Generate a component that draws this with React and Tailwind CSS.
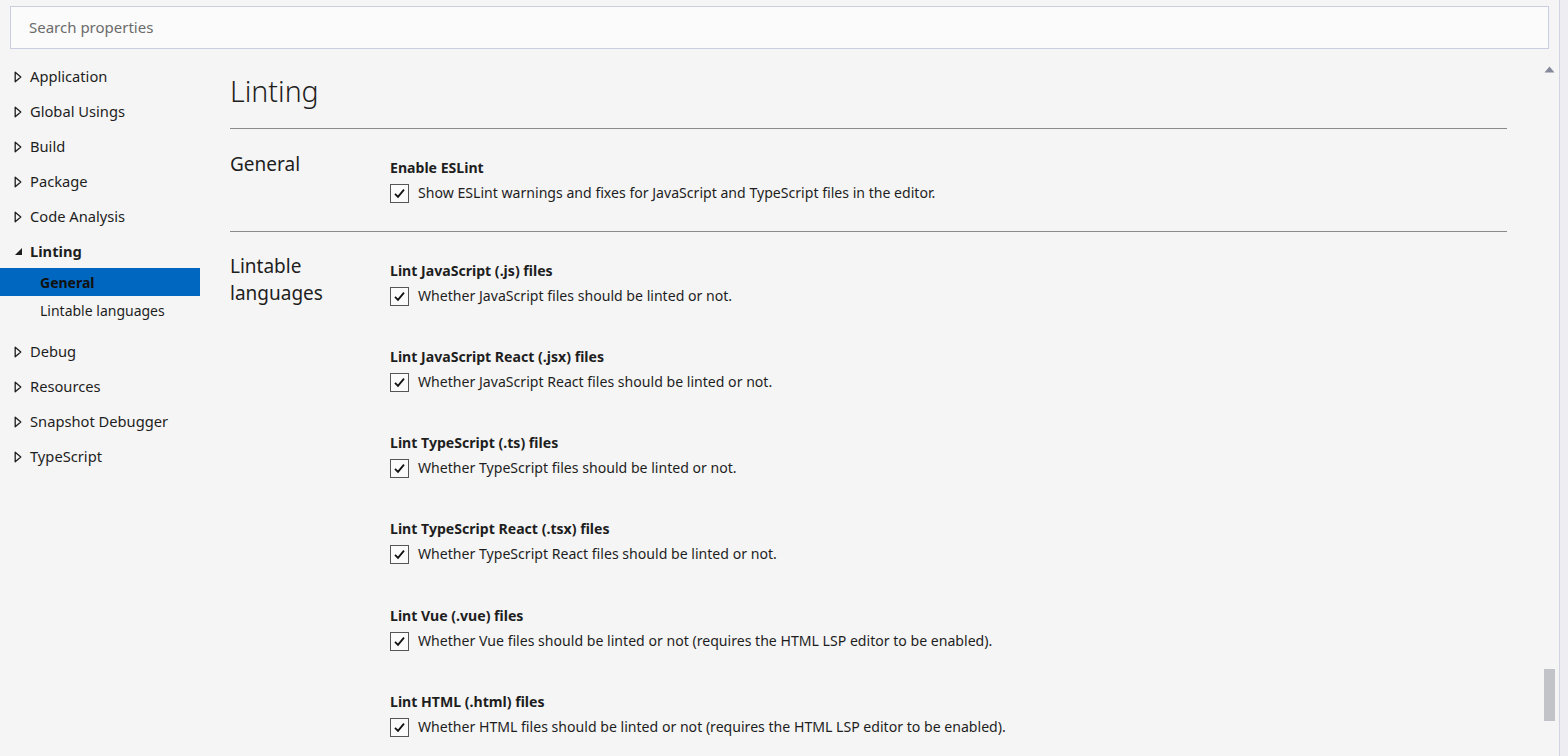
import React from "react";

const FONT = { fontFamily: '"Noto Sans", "Open Sans", sans-serif' };

function Closed() {
  return (
    <svg width="8" height="12" viewBox="0 0 8 12" className="shrink-0">
      <path d="M1.2 1.2 L6.8 6 L1.2 10.8 Z" fill="none" stroke="#1e1e1e" strokeWidth="1.3" strokeLinejoin="round" />
    </svg>
  );
}

function Open() {
  return (
    <svg width="9" height="9" viewBox="0 0 9 9" className="shrink-0">
      <path d="M8 1 L8 8 L1 8 Z" fill="#1e1e1e" />
    </svg>
  );
}

function Check() {
  return (
    <div className="w-[19px] h-[19px] border border-[#555555] bg-[#fbfbfb] flex items-center justify-center shrink-0">
      <svg width="13" height="13" viewBox="0 0 13 13">
        <path d="M2 6.8 L5 9.8 L11 2.6" fill="none" stroke="#111111" strokeWidth="1.8" />
      </svg>
    </div>
  );
}

function NavItem({ label, open }) {
  return (
    <div className={(open ? "h-[34px]" : "h-[35px]") + " flex items-center pl-[14px]"}>
      <div className="w-[16px] flex items-center">{open ? <Open /> : <Closed />}</div>
      <span className={open ? "font-bold" : ""}>{label}</span>
    </div>
  );
}

function Option({ title, desc, gap }) {
  return (
    <div className={gap}>
      <div className="h-[20px] leading-[20px] font-bold">{title}</div>
      <div className="mt-[5px] h-[20px] flex items-center gap-[9px]">
        <Check />
        <span>{desc}</span>
      </div>
    </div>
  );
}

export default function App() {
  const langs = [
    ["Lint JavaScript (.js) files", "Whether JavaScript files should be linted or not.", ""],
    ["Lint JavaScript React (.jsx) files", "Whether JavaScript React files should be linted or not.", "mt-[41px]"],
    ["Lint TypeScript (.ts) files", "Whether TypeScript files should be linted or not.", "mt-[41px]"],
    ["Lint TypeScript React (.tsx) files", "Whether TypeScript React files should be linted or not.", "mt-[41px]"],
    ["Lint Vue (.vue) files", "Whether Vue files should be linted or not (requires the HTML LSP editor to be enabled).", "mt-[42px]"],
    ["Lint HTML (.html) files", "Whether HTML files should be linted or not (requires the HTML LSP editor to be enabled).", "mt-[41px]"],
  ];
  return (
    <div style={FONT} className="w-[1568px] h-[756px] overflow-hidden flex bg-[#f5f5f5] text-[#1e1e1e] text-[14.1px]">
      <div className="flex-1 flex flex-col min-w-0">
        <div className="mt-[6px] mx-[10px] h-[43px] border border-[#cbcde0] bg-[#fbfbfb] flex items-center pl-[18px] text-[15px] text-[#6b6b6b]">
          Search properties
        </div>
        <div className="flex flex-1 min-h-0">
          <div className="w-[200px] shrink-0 pt-[10px] text-[14.7px]">
            <NavItem label="Application" />
            <NavItem label="Global Usings" />
            <NavItem label="Build" />
            <NavItem label="Package" />
            <NavItem label="Code Analysis" />
            <NavItem label="Linting" open />
            <div className="h-[28px] bg-[#0067c0] flex items-center pl-[40px] font-bold text-[#111111] text-[14px]">General</div>
            <div className="h-[29px] flex items-center pl-[40px] text-[14px]">Lintable languages</div>
            <div className="h-[9px]" />
            <NavItem label="Debug" />
            <NavItem label="Resources" />
            <NavItem label="Snapshot Debugger" />
            <NavItem label="TypeScript" />
          </div>
          <div className="flex-1 pl-[30px] pr-[34px] min-w-0">
            <div className="mt-[22px] h-[40px] leading-[40px] text-[28.5px] font-light">Linting</div>
            <div className="mt-[17px] border-t border-[#8a8a8a]" />
            <div className="flex pt-[21px] pb-[28px]">
              <div className="w-[160px] shrink-0 text-[19px] leading-[28px]">General</div>
              <div className="mt-[8px]">
                <Option gap="" title="Enable ESLint" desc="Show ESLint warnings and fixes for JavaScript and TypeScript files in the editor." />
              </div>
            </div>
            <div className="border-t border-[#8a8a8a]" />
            <div className="flex pt-[21px]">
              <div className="w-[160px] shrink-0 text-[19px] leading-[27px]">
                Lintable
                <br />
                languages
              </div>
              <div className="mt-[8px]">
                {langs.map(([t, d, g]) => (
                  <Option key={t} gap={g} title={t} desc={d} />
                ))}
              </div>
            </div>
          </div>
          <div className="w-[16px] shrink-0 flex flex-col items-center mr-[2px]">
            <svg width="11" height="7" viewBox="0 0 11 7" className="mt-[17px]">
              <path d="M5.5 0.5 L10.5 6.5 L0.5 6.5 Z" fill="#868999" />
            </svg>
            <div className="mt-[596px] w-[11px] h-[52px] bg-[#c2c3c9]" />
          </div>
        </div>
      </div>
      <div className="w-[9px] shrink-0 border-l border-[#d3d4e3] bg-[#ededf2]" />
    </div>
  );
}
